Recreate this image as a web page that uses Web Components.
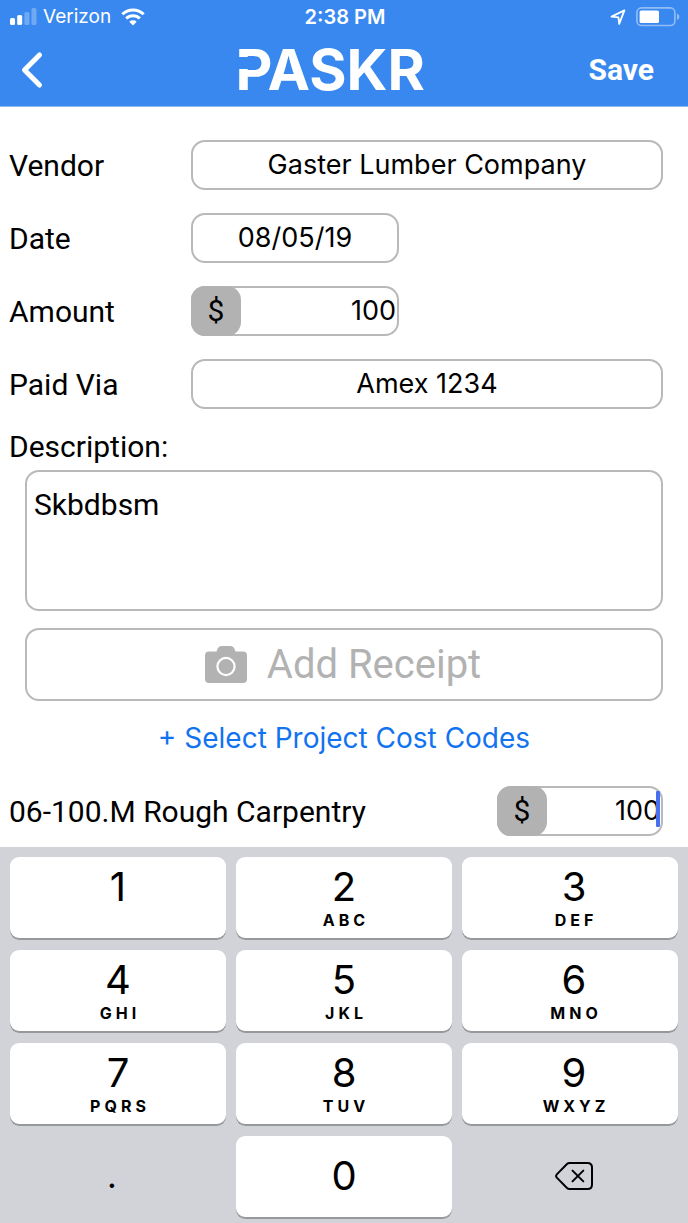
<!DOCTYPE html>
<html lang="en">
<head>
<meta charset="utf-8">
<meta name="viewport" content="width=device-width, initial-scale=1">
<title>PASKR – Expense</title>
<style>
  body { margin: 0; background: #fff; color: #000; font-family: Roboto, "Liberation Sans", sans-serif; }
</style>
</head>
<body>
<expense-screen></expense-screen>

<script>
const define = (name, html, setup) => {
  const template = document.createElement('template');
  template.innerHTML = html;
  customElements.define(name, class extends HTMLElement {
    constructor() {
      super();
      this.attachShadow({ mode: 'open' }).append(template.content.cloneNode(true));
    }
    connectedCallback() { if (setup) setup(this, this.shadowRoot); }
  });
};

define('status-bar', `
<style>
  :host { display: grid; grid-template-columns: 1fr auto 1fr; align-items: center; height: 34px; padding: 0 8px 0 10px;
    color: #fff; font: 400 19px/24px Inter, sans-serif; }
  div { display: flex; align-items: center; }
  .carrier { gap: 6px; }
  .carrier .wifi { margin-left: 4px; }
  .power { justify-content: flex-end; gap: 10px; }
  time { font-weight: 600; font-size: 20px; }
  svg { display: block; }
</style>
<div class="carrier">
  <svg width="27" height="18" viewBox="0 0 27 18" fill="#fff" aria-label="Signal">
    <rect x="0" y="10" width="5" height="7" rx="1.5"/><rect x="7.2" y="7" width="5" height="10" rx="1.5"/>
    <g opacity=".28"><rect x="14.4" y="4" width="5" height="13" rx="1.5"/><rect x="21.5" y="0" width="5" height="17" rx="1.5"/></g>
  </svg>
  <span>Verizon</span>
  <svg class="wifi" width="24" height="18" viewBox="0 0 24 18" fill="none" stroke="#fff" stroke-width="3" aria-label="Wi-Fi">
    <path d="M1.3 6.3a15.2 15.2 0 0 1 21.4 0"/><path d="M5.2 10.5a9.7 9.7 0 0 1 13.6 0"/>
    <path d="M12 17.4 8.3 13.7a5.4 5.4 0 0 1 7.4 0z" fill="#fff" stroke="none"/>
  </svg>
</div>
<time>2:38 PM</time>
<div class="power">
  <svg width="16" height="18" viewBox="0 0 16 18" fill="none" stroke="#fff" stroke-width="1.8" stroke-linejoin="round" aria-label="Location">
    <path d="M1.5 8.6 14.4 2.4 9.2 15.8 8.5 9.3z"/>
  </svg>
  <svg width="44" height="20" viewBox="0 0 44 20" aria-label="Battery">
    <rect x=".9" y=".9" width="38" height="17.6" rx="4.5" fill="none" stroke="#fff" stroke-width="1.6" opacity=".45"/>
    <rect x="3.6" y="3.4" width="19.4" height="12.6" rx="1.6" fill="#fff"/>
    <path d="M41 6.4q2.4.8 2.4 3.3T41 13z" fill="#fff" opacity=".45"/>
  </svg>
</div>`);

define('nav-bar', `
<style>
  :host { display: flex; justify-content: space-between; align-items: center; height: 72px; padding-right: 34px; color: #fff; }
  button { border: 0; padding: 0; background: none; color: inherit; cursor: pointer; font: 700 30px/36px Roboto, sans-serif; }
  .back { width: 72px; height: 48px; padding-left: 20px; }
  svg { display: block; }
  h1 { position: relative; margin: 0; font: 700 57px/64px Inter, sans-serif; }
  /* notch that opens the stem of the P in the wordmark */
  h1::before { content: ""; position: absolute; left: 0; top: 19px; width: 13px; height: 12px; background: #3888f0; }
</style>
<button class="back" aria-label="Back">
  <svg width="24" height="38" viewBox="0 0 24 38" fill="none" stroke="#fff" stroke-width="5" stroke-linecap="round" stroke-linejoin="round"><path d="M19.5 4 4.5 19l15 15"/></svg>
</button>
<h1>PASKR</h1>
<button>Save</button>`);

/* One labelled line of the form. kind="money" adds the currency tile. */
define('form-field', `
<style>
  :host { display: flex; align-items: center; padding: 0 25px 0 9px; }
  label { flex: 0 0 182px; padding-top: 1px; font: 400 30px/36px Roboto, sans-serif; }
  .box { position: relative; display: flex; flex: 1; min-width: 0; height: 50px; box-sizing: border-box;
    border: 2px solid #b9b9b9; border-radius: 14px; }
  :host([size=short]) .box { flex: 0 0 208px; }
  :host([size=tail]) label { flex: 1; }
  :host([size=tail]) .box { flex: 0 0 166px; }
  input { flex: 1; min-width: 0; width: 100%; border: 0; padding: 0; outline: 0; background: none; color: inherit;
    text-align: center; font: 400 27px/34px Inter, sans-serif; }
  .unit { display: none; flex: 0 0 50px; height: 50px; margin: -2px 0 0 -2px; border-radius: 14px; background: #b2b2b2;
    text-align: center; font: 400 30px/50px Roboto, sans-serif; }
  :host([kind=money]) .unit { display: block; }
  :host([kind=money]) input { text-align: right; padding-right: 1px; }
  .caret { display: none; position: absolute; right: 1px; top: 3px; width: 4px; height: 36px; border-radius: 1px; background: #466ff2; }
  :host([editing]) .caret { display: block; }
</style>
<label for="field"></label>
<div class="box"><span class="unit">$</span><input id="field" type="text"><i class="caret"></i></div>`,
(host, root) => {
  root.querySelector('label').textContent = host.getAttribute('label');
  root.querySelector('input').value = host.getAttribute('value');
});

define('note-field', `
<style>
  :host { display: block; padding: 0 25px 0 9px; }
  label { display: block; font: 400 30px/36px Roboto, sans-serif; }
  textarea { display: block; box-sizing: border-box; width: calc(100% - 16px); height: 141px; margin: 5px 0 0 16px; padding: 15px 7px;
    border: 2px solid #b9b9b9; border-radius: 14px; resize: none; outline: 0; background: none; color: inherit; font: 400 30px/36px Roboto, sans-serif; }
</style>
<label for="note">Description:</label>
<textarea id="note">Skbdbsm</textarea>`);

define('receipt-button', `
<style>
  :host { display: block; padding: 0 25px; }
  button { display: flex; align-items: center; justify-content: center; gap: 20px; width: 100%; height: 73px; padding: 0 2px 0 0;
    border: 2px solid #b9b9b9; border-radius: 14px; background: none; color: #b2b2b2; cursor: pointer; font: 400 40px/48px Roboto, sans-serif; }
</style>
<button>
  <svg width="42" height="37" viewBox="0 0 42 37" aria-hidden="true">
    <path fill="#b2b2b2" d="M4 5.5h7.5l1.2-3Q13.8 0 16 0h10q2.2 0 3.3 2.5l1.2 3H38q4 0 4 4V33q0 4-4 4H4q-4 0-4-4V9.500q0-4 4-4z"/>
    <circle cx="21" cy="20.500" r="8.600" fill="none" stroke="#fff" stroke-width="2.200"/>
  </svg>
  <slot></slot>
</button>`);

define('link-line', `
<style>
  :host { display: block; text-align: center; font: 400 28px/36px Inter, sans-serif; }
  a { color: #1173f0; text-decoration: none; }
</style>
<a href="#cost-codes"><slot></slot></a>`);

define('pad-key', `
<style>
  :host { display: block; }
  button { display: flex; flex-direction: column; align-items: center; justify-content: flex-start; box-sizing: border-box; width: 100%; height: 83px;
    padding: 9px 0 0; border: 0; border-radius: 9px; background: #fff; box-shadow: inset 0 -2px #97989b; color: #000;
    font: 400 40px/42px Inter, sans-serif; cursor: pointer; }
  ::slotted(small) { padding-left: 4px; font: 700 16px/24px Inter, sans-serif; letter-spacing: 4px; }
  ::slotted(b) { padding-right: 12px; font: 400 34px/42px Inter, sans-serif; }
  :host([plain]) button { background: none; box-shadow: none; }
  :host([middle]) button { justify-content: center; padding: 0 0 4px; }
  :host([last]) button { padding-left: 8px; }
</style>
<button><slot></slot></button>`, (host, root) => {
  if (host.title) root.querySelector('button').setAttribute('aria-label', host.title);
});

define('number-pad', `
<style>
  :host { display: grid; grid-template-columns: repeat(3, 1fr); gap: 10px; padding: 10px 10px 5px; background: #d1d3d9; }
  svg { display: block; }
</style>
<pad-key>1</pad-key>
<pad-key>2<small>ABC</small></pad-key>
<pad-key last>3<small>DEF</small></pad-key>
<pad-key>4<small>GHI</small></pad-key>
<pad-key>5<small>JKL</small></pad-key>
<pad-key last>6<small>MNO</small></pad-key>
<pad-key>7<small>PQRS</small></pad-key>
<pad-key>8<small>TUV</small></pad-key>
<pad-key last>9<small>WXYZ</small></pad-key>
<pad-key plain middle><b>.</b></pad-key>
<pad-key middle>0</pad-key>
<pad-key plain middle last title="Delete">
  <svg width="38" height="28" viewBox="0 0 38 28" fill="none" stroke="#000" stroke-width="2" stroke-linecap="round" stroke-linejoin="round">
    <path d="M14.500 1H32.500Q37 1 37 5.500V22.500Q37 27 32.500 27H14.500Q13 27 12 26L1.800 15.600Q.4 14 1.800 12.400L12 2Q13 1 14.500 1z"/>
    <path d="M17.500 8.600 28.300 19.400M28.300 8.600 17.500 19.400"/>
  </svg>
</pad-key>`);

define('expense-screen', `
<style>
  :host { display: flex; flex-direction: column; min-height: 100vh; }
  header { background: #3888f0; border-bottom: 1px solid #8fb9ee; }
  main { flex: 1; padding: 33px 0 11px; }
  .fields { display: grid; gap: 23px; }
  note-field { margin-top: 20px; }
  receipt-button { margin-top: 17px; }
  link-line { margin-top: 19px; }
  .code { margin-top: 30px; }
</style>
<header><status-bar></status-bar><nav-bar></nav-bar></header>
<main>
  <div class="fields">
    <form-field label="Vendor" value="Gaster Lumber Company"></form-field>
    <form-field label="Date" value="08/05/19" size="short"></form-field>
    <form-field label="Amount" value="100" size="short" kind="money"></form-field>
    <form-field label="Paid Via" value="Amex 1234"></form-field>
  </div>
  <note-field></note-field>
  <receipt-button>Add Receipt</receipt-button>
  <link-line>+ Select Project Cost Codes</link-line>
  <form-field class="code" label="06-100.M Rough Carpentry" value="100" size="tail" kind="money" editing></form-field>
</main>
<number-pad></number-pad>`);
</script>
</body>
</html>
